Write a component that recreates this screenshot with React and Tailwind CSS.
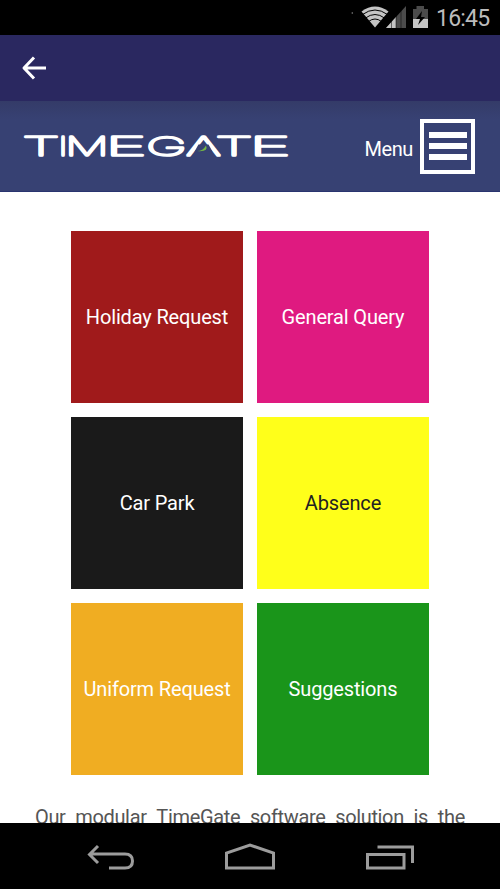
const tiles = [
  { label: "Holiday Request", style: "bg-[#a01a1b] text-white" },
  { label: "General Query", style: "bg-[#df1a80] text-white" },
  { label: "Car Park", style: "bg-[#1a1a1a] text-white" },
  { label: "Absence", style: "bg-[#ffff1a] text-[#222]" },
  { label: "Uniform Request", style: "bg-[#f0ad22] text-white" },
  { label: "Suggestions", style: "bg-[#1a951a] text-white" },
];

// Wordmark letters: [character, left edge, set width]
const letters = [
  ["T", 0, 38],
  ["I", 36, 10],
  ["M", 43, 44],
  ["E", 83, 42],
  ["G", 124, 41],
  ["A", 164, 35],
  ["T", 193, 38],
  ["E", 227, 42],
];

function Logo() {
  return (
    <svg width="272" height="50" viewBox="0 -12 272 50" className="overflow-visible" role="img" aria-label="TIMEGATE">
      <text className="[text-shadow:0_1px_0_#fff]" fontFamily="Inter, sans-serif" fontSize="25" fontWeight="100" fill="#fff" stroke="#fff" strokeWidth="1.5" strokeLinejoin="round">
        {letters.map(([c, x, w], i) => (
          <tspan key={i} x={x} y="21.5" textLength={w} lengthAdjust="spacingAndGlyphs">{c}</tspan>
        ))}
      </text>
      <path d="M176.500 11.500H186.500L190.500 18.500H172.500Z" fill="#374173" />
      <path d="M175 18Q181 18 184 12.500Q187 19 175 18Z" fill="#74b843" />
    </svg>
  );
}

function StatusBar() {
  return (
    <div className="flex h-[35px] shrink-0 items-center bg-black pl-[350px] text-[#bcbcbc]">
      <svg width="80" height="35" viewBox="0 0 80 35" fill="none" className="shrink-0">
        <circle cx="2.3" cy="13" r="0.8" fill="#888" />
        <path d="M11.500 11.500Q25 1.500 38.500 11.500L25 27.500Z" fill="#c4c4c4" />
        <path d="M12.500 14.500Q25 5.500 37.500 14.500M15.500 18Q25 11 34.500 18M18.500 21.500Q25 16.500 31.500 21.500" stroke="#000" strokeWidth="1" />
        <path d="M36 28L56 6V28Z" fill="#4b4b4b" />
        <path d="M36 28L46 17V28Z" fill="#c4c4c4" />
        <path d="M41.500 20V28M46 15V28M51 10V28" stroke="#000" strokeWidth="0.5" />
        <path d="M63 9H66.500V6H74V9H78V28H63Z" fill="#4b4b4b" />
        <path d="M63 19H78V28H63Z" fill="#c4c4c4" />
        <path d="M72 11L66 19H70L68 25L75 17H71Z" fill="#000" />
      </svg>
      <span className="ml-[6px] mt-[2px] text-[23px] leading-7 tracking-[-0.8px]">16:45</span>
    </div>
  );
}

function Menu() {
  return (
    <div className="flex items-center">
      <span className="mr-[7px] mt-[5px] text-[20px] leading-6 tracking-[-0.4px] text-white">Menu</span>
      <div className="flex h-[55px] w-[55px] flex-col justify-center gap-[5px] border-4 border-white pl-[5px] pr-[4px]">
        <div className="h-[6px] bg-white" />
        <div className="h-[6px] bg-white" />
        <div className="h-[6px] bg-white" />
      </div>
    </div>
  );
}

function NavBar() {
  return (
    <nav className="flex h-[66px] shrink-0 justify-center bg-black">
      <svg width="340" height="66" viewBox="80 823 340 66" fill="none" stroke="#9c9c9c" strokeWidth="3">
        <path d="M98 846L89.500 854.500L98 863M90 854H125Q132.500 854 132.500 861T125 868H109" />
        <path d="M226.500 868V853L250 845L273.500 853V868Z" />
        <path d="M367.500 854.500H404V868H367.500ZM377.500 847H412.500V863" />
      </svg>
    </nav>
  );
}

export default function App() {
  return (
    <div className="flex h-[889px] w-[500px] flex-col overflow-hidden bg-white font-['Roboto',sans-serif]">
      <StatusBar />
      <div className="flex h-[66px] shrink-0 items-center bg-[#2a2860] pl-[21px]">
        <svg width="27" height="26" viewBox="0 0 27 26" fill="none" stroke="#fff" strokeWidth="3">
          <path d="M13 2.500L3 13L13 23.500M3 13H25" strokeLinejoin="round" />
        </svg>
      </div>
      <header className="flex h-[91px] shrink-0 items-center justify-between border-b border-[#29346f] bg-gradient-to-b from-[#343b68] via-[#374173] via-20% to-[#374173] pl-[22px] pr-[25px]">
        <Logo />
        <Menu />
      </header>
      <main className="flex min-h-0 flex-1 flex-col items-center overflow-hidden pt-[39px]">
        <div className="grid shrink-0 grid-cols-[172px_172px] gap-[14px]">
          {tiles.map((t) => (
            <div key={t.label} className={`flex h-[172px] items-center justify-center text-[20px] tracking-[-0.15px] ${t.style}`}>
              {t.label}
            </div>
          ))}
        </div>
        <p className="mt-[30px] flex w-[430px] shrink-0 justify-between text-[20px] leading-6 tracking-[-0.35px] text-[#555]">
          {"Our modular TimeGate software solution is the".split(" ").map((w) => (
            <span key={w}>{w}</span>
          ))}
        </p>
      </main>
      <NavBar />
    </div>
  );
}
